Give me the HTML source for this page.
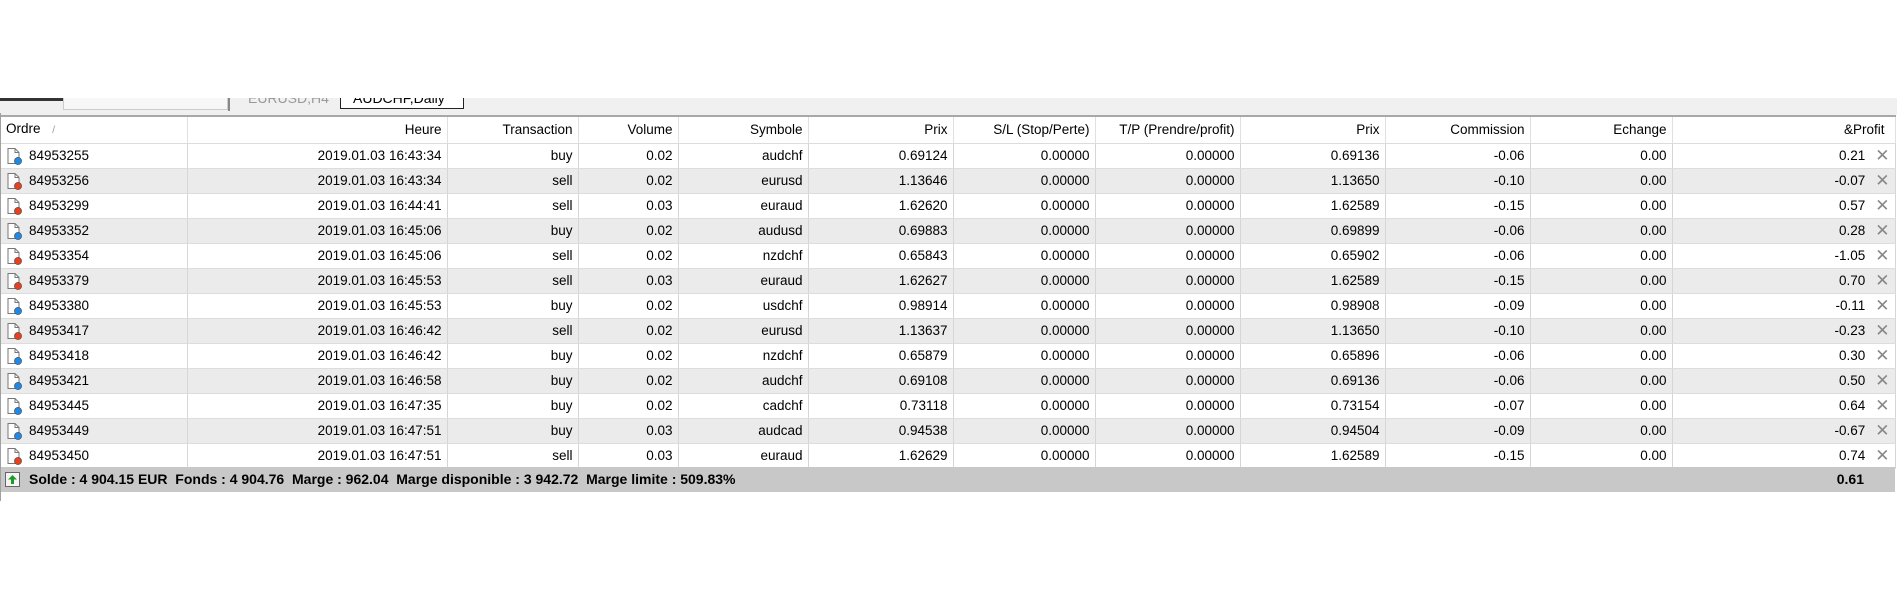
<!DOCTYPE html>
<html><head><meta charset="utf-8"><style>
*{margin:0;padding:0;box-sizing:border-box}
body{width:1897px;height:599px;background:#fff;position:relative;overflow:hidden;font-family:"Liberation Sans",sans-serif;font-size:13.5px;color:#000}
.strip{position:absolute;left:0;top:98px;width:1897px;height:17px;background:#f0f0f0;overflow:hidden}
table{position:absolute;left:1px;top:115px;border-collapse:collapse;table-layout:fixed;width:1894px}
tr{height:25px}
td,th{height:25px;line-height:16px;padding:0 5px;text-align:right;white-space:nowrap;font-weight:normal;border-right:1px solid #d6d6d6;border-bottom:1px solid #dcdcdc;overflow:hidden;vertical-align:middle}
tr.h{height:27px}
th{height:27px;border-top:2px solid #a8a8a8;border-right:1px solid #e0e0e0}
td:first-child,th:first-child{text-align:left}
td:first-child{position:relative;padding-left:28px}
tr.g td{background:#ebebeb}
.ic{position:absolute;left:4px;top:3px}
.x{color:#888;font-size:17px;margin-left:10px;position:relative;top:1px;line-height:16px}
.sum{position:absolute;left:1px;top:467px;width:1894px;height:25px;background:#c8c8c8;font-weight:bold;font-size:14px;line-height:25px}
.vl{position:absolute;left:0;top:113px;width:1px;height:388px;background:#a0a0a0}
</style></head><body>
<div class="strip">
 <div style="position:absolute;left:0;top:0;width:63px;height:3px;background:#333"></div>
 <div style="position:absolute;left:63px;top:0;width:165px;height:12px;background:#f7f7f7;border:1px solid #ccc;border-top:none"></div>
 <div style="position:absolute;left:228px;top:0;width:2px;height:13px;background:#888"></div>
 <div style="position:absolute;left:248px;top:-8px;color:#999;font-size:14px">EURUSD,H4</div>
 <div style="position:absolute;left:340px;top:-1px;width:124px;height:12px;border:1px solid #222;border-top:none;background:#fff;overflow:hidden"><div style="position:absolute;left:12px;top:-7px;font-size:14px">AUDCHF,Daily</div></div>
</div>
<div class="vl"></div>
<table>
<colgroup><col style="width:186px"><col style="width:260px"><col style="width:131px"><col style="width:100px"><col style="width:130px"><col style="width:145px"><col style="width:142px"><col style="width:145px"><col style="width:145px"><col style="width:145px"><col style="width:142px"><col style="width:223px"></colgroup>
<tr class="h"><th>Ordre <span style="color:#999;font-size:10px;margin-left:8px">/</span></th><th>Heure</th><th>Transaction</th><th>Volume</th><th>Symbole</th><th>Prix</th><th>S/L (Stop/Perte)</th><th>T/P (Prendre/profit)</th><th>Prix</th><th>Commission</th><th>Echange</th><th style="padding-right:10px">&amp;Profit</th></tr>
</table>
<script>
const rows=[["84953255","16:43:34","buy","0.02","audchf","0.69124","0.69136","-0.06","0.21"],
["84953256","16:43:34","sell","0.02","eurusd","1.13646","1.13650","-0.10","-0.07"],
["84953299","16:44:41","sell","0.03","euraud","1.62620","1.62589","-0.15","0.57"],
["84953352","16:45:06","buy","0.02","audusd","0.69883","0.69899","-0.06","0.28"],
["84953354","16:45:06","sell","0.02","nzdchf","0.65843","0.65902","-0.06","-1.05"],
["84953379","16:45:53","sell","0.03","euraud","1.62627","1.62589","-0.15","0.70"],
["84953380","16:45:53","buy","0.02","usdchf","0.98914","0.98908","-0.09","-0.11"],
["84953417","16:46:42","sell","0.02","eurusd","1.13637","1.13650","-0.10","-0.23"],
["84953418","16:46:42","buy","0.02","nzdchf","0.65879","0.65896","-0.06","0.30"],
["84953421","16:46:58","buy","0.02","audchf","0.69108","0.69136","-0.06","0.50"],
["84953445","16:47:35","buy","0.02","cadchf","0.73118","0.73154","-0.07","0.64"],
["84953449","16:47:51","buy","0.03","audcad","0.94538","0.94504","-0.09","-0.67"],
["84953450","16:47:51","sell","0.03","euraud","1.62629","1.62589","-0.15","0.74"]];
const t=document.querySelector('table');let h='';
rows.forEach((r,i)=>{const col=r[2]=='buy'?'#1e88e5':'#e8401c';
const ic=`<svg class="ic" width="18" height="18" viewBox="0 0 18 18"><path d="M3 1.5h7l4 4v11H3z" fill="#fff" stroke="#777"/><path d="M10 1.5v4h4" fill="none" stroke="#777"/><circle cx="13" cy="14" r="3.6" fill="${col}" stroke="#444" stroke-width=".6"/></svg>`;
h+=`<tr class="${i%2?'g':''}"><td>${ic}${r[0]}</td><td>2019.01.03 ${r[1]}</td><td>${r[2]}</td><td>${r[3]}</td><td>${r[4]}</td><td>${r[5]}</td><td>0.00000</td><td>0.00000</td><td>${r[6]}</td><td>${r[7]}</td><td>0.00</td><td>${r[8]}<span class="x">✕</span></td></tr>`;});
t.insertAdjacentHTML('beforeend',h);
</script>
<div class="sum">
 <svg style="position:absolute;left:4px;top:5px" width="15" height="15" viewBox="0 0 15 15"><rect x=".5" y=".5" width="14" height="14" fill="#f4f4f4" stroke="#666"/><path d="M7.5 3L3 7.5h3V12h3V7.5h3z" fill="#1a9a2a"/></svg>
 <span style="position:absolute;left:28px">Solde : 4 904.15 EUR&nbsp; Fonds : 4 904.76&nbsp; Marge : 962.04&nbsp; Marge disponible : 3 942.72&nbsp; Marge limite : 509.83%</span>
 <span style="position:absolute;right:31px">0.61</span>
</div>
</body></html>
